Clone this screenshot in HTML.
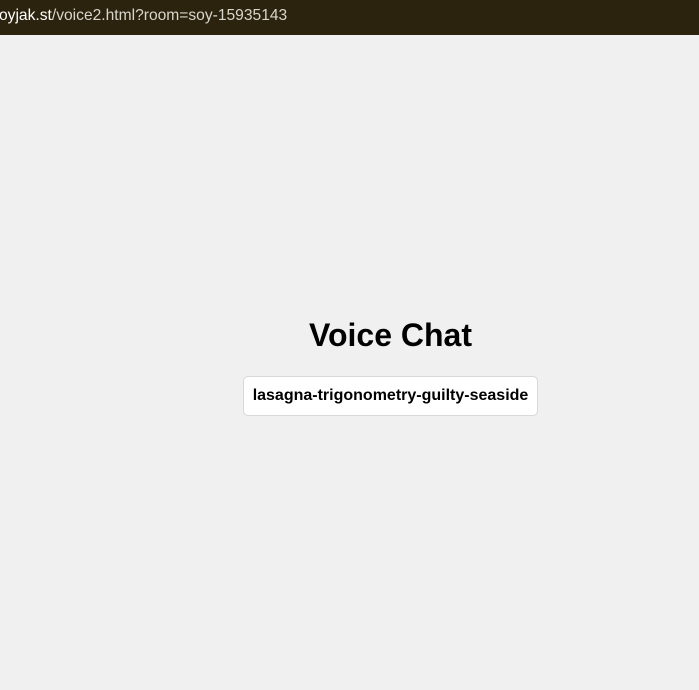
<!DOCTYPE html>
<html><head><meta charset="utf-8"><style>
html,body{margin:0;padding:0;width:699px;height:690px;overflow:hidden;background:#f0f0f0;font-family:"Liberation Sans",sans-serif;}
.bar{position:absolute;left:0;top:0;width:699px;height:35px;background:#2c230e;}
.url{position:absolute;left:-1px;top:7px;color:#d8d5cc;font-size:15.6px;white-space:nowrap;}
.url span{color:#fff}
h1{position:absolute;left:0;width:781px;top:317px;margin:0;text-align:center;font-size:32px;font-weight:bold;color:#000;}
.box{position:absolute;left:243px;top:376px;width:293px;height:38px;background:#fff;border:1px solid #d8d8d8;border-radius:5px;box-sizing:content-box;text-align:center;line-height:38px;font-size:16px;font-weight:bold;color:#000;}
</style></head><body>
<div class="bar"><div class="url"><span>oyjak.st</span>/voice2.html?room=soy-15935143</div></div>
<h1>Voice Chat</h1>
<div class="box">lasagna-trigonometry-guilty-seaside</div>
</body></html>
